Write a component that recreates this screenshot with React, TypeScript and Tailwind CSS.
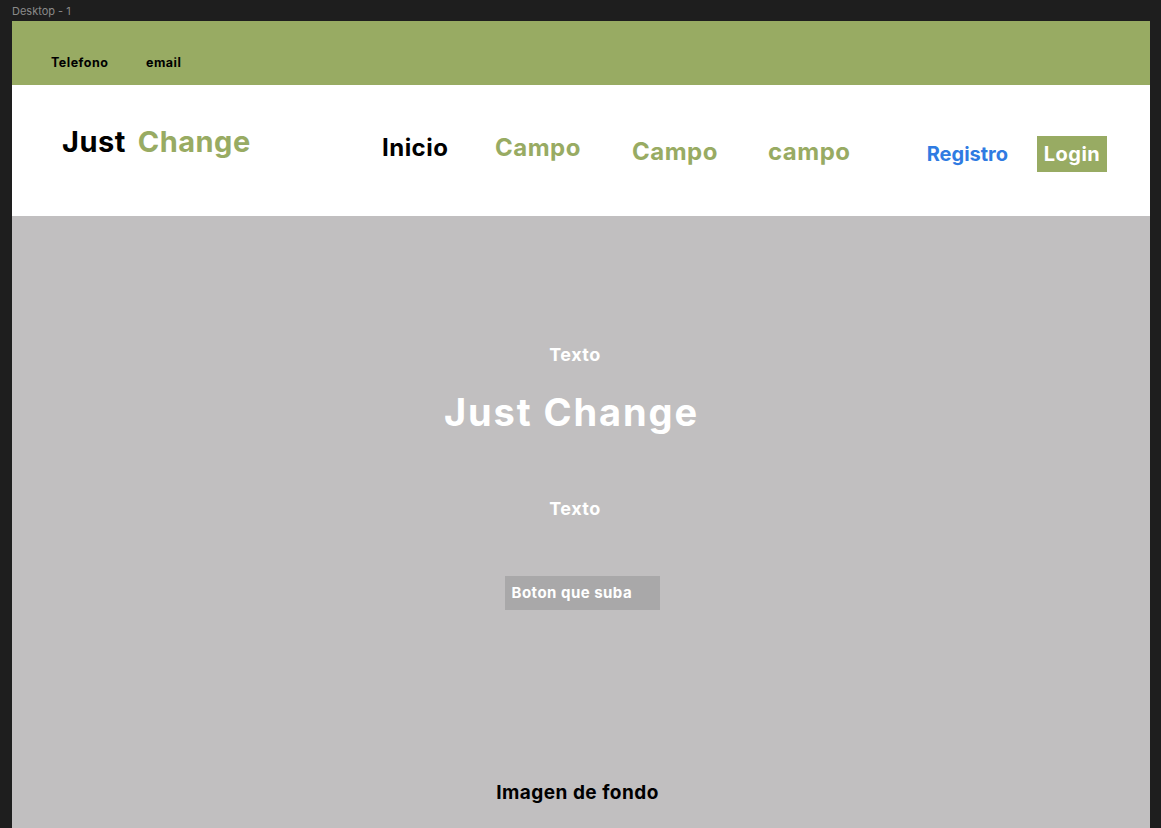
export default function App() {
  const font = { fontFamily: "Inter, 'Noto Sans', sans-serif" };

  return (
    <div className="min-h-screen w-full bg-[#1e1e1e] pl-[12px]" style={font}>
      <div className="h-[21px] pt-[5px] text-[11px] leading-[12px] text-[#8a8a8a]">Desktop - 1</div>

      <div className="flex w-[1138px] flex-col tracking-[0.03em]">
        {/* top contact bar */}
        <div className="flex h-[64px] items-start bg-[#98ab63] pl-[39px] pt-[34px] text-[12.5px] font-bold leading-[16px] text-black">
          <span className="w-[95px]">Telefono</span>
          <span>email</span>
        </div>

        {/* header */}
        <div className="flex h-[131px] items-start bg-white">
          <div className="ml-[50px] mt-[40px] flex w-[320px] gap-[12px] text-[29px] font-bold leading-[34px]">
            <span className="text-black">Just</span>
            <span className="text-[#98ab63]">Change</span>
          </div>

          <nav className="flex items-start text-[24px] font-bold leading-[30px]">
            <span className="mt-[48px] w-[113px] text-black">Inicio</span>
            <span className="mt-[48px] w-[137px] text-[#98ab63]">Campo</span>
            <span className="mt-[52px] w-[136px] text-[#98ab63]">Campo</span>
            <span className="mt-[52px] text-[#98ab63]">campo</span>
          </nav>

          <div className="ml-auto mr-[43px] mt-[51px] flex items-center gap-[29px]">
            <span className="text-[20px] font-bold leading-[26px] tracking-normal text-[#2f7be2]">Registro</span>
            <button className="flex h-[36px] w-[70px] items-center justify-center bg-[#98ab63] text-[20px] font-bold text-white">
              Login
            </button>
          </div>
        </div>

        {/* hero */}
        <div className="flex h-[612px] flex-col items-center bg-[#c1bfc0] text-center">
          <div className="mr-[12px] mt-[127px] text-[18px] font-bold leading-[24px] text-white">Texto</div>
          <div className="mr-[19px] mt-[23px] text-[38px] font-bold leading-[44px] tracking-[0.05em] text-white">
            Just Change
          </div>
          <div className="mr-[12px] mt-[63px] text-[18px] font-bold leading-[24px] text-white">Texto</div>
          <button className="ml-[2px] mt-[55px] flex h-[34px] w-[155px] items-center bg-[#a9a8a9] pl-[7px] text-[15px] font-bold text-white">
            Boton que suba
          </button>
          <div className="mr-[7px] mt-[171px] text-[19px] font-bold leading-[24px] text-black">Imagen de fondo</div>
        </div>
      </div>
    </div>
  );
}
